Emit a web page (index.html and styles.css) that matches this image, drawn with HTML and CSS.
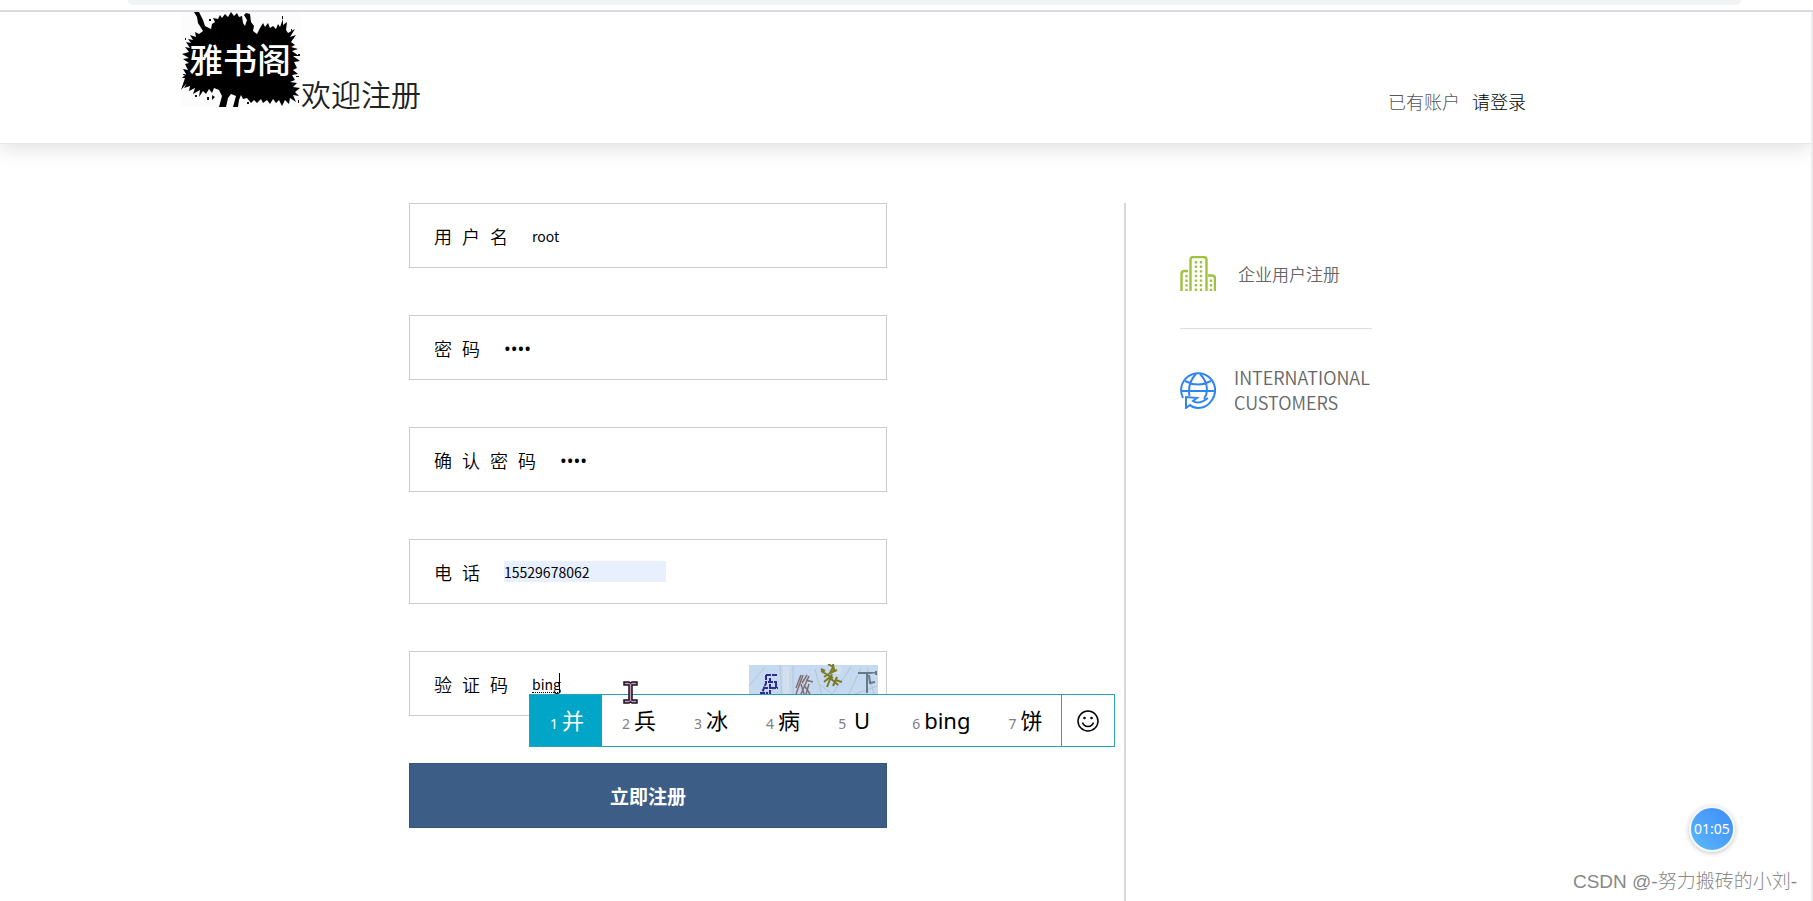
FILE: index.html
```html
<!DOCTYPE html>
<html lang="zh-CN">
<head>
<meta charset="utf-8">
<title>欢迎注册</title>
<link rel="stylesheet" href="styles.css">
</head>
<body>
<div class="toolbar"><div class="omnibox"></div></div>
<div class="page">
  <header class="header">
    <div class="header-inner">
      <div class="brand">
        <svg class="logo" viewBox="0 0 120 95" role="img" aria-label="雅书阁">
          <rect width="120" height="95" fill="#fcfcfc"/>
          <path d="M13 0L18 0L22 8L24 14L30 17L31 12L34 10L32 6L37 7L39 3L41 6L44 2L47 5L50 0L53 4L56 1L58 5L61 4L62 11L64 14L66 8L63 3L65 1L69 2L70 10L73 14L72 19L76 22L79 16L82 11L84 15L87 11L89 16L92 14L95 17L97 12L99 15L102 7L102 13L106 10L105 18L107 21L114 17L109 25L115 23L110 30L114 33L110 35L117 37L111 39L118 44L112 44L119 49L113 50L116 56L112 58L117 62L111 63L114 68L109 70L116 71L112 75L119 76L114 80L118 84L112 83L115 90L109 86L108 92L104 88L101 94L98 88L95 91L92 87L89 92L86 88L82 91L80 87L76 91L73 88L70 91L66 86L62 87L60 83L58 88L57 95L52 95L55 84L50 82L47 86L45 95L38 95L41 84L38 78L33 76L31 81L28 77L25 82L22 79L18 85L19 78L12 82L14 76L8 79L9 74L3 76L6 71L0 78L4 66L1 66L5 62L2 57L7 58L4 52L8 51L2 47L8 46L1 42L8 40L4 35L9 36L5 30L10 31L7 27L12 28L9 23L15 25L14 20L18 22L22 19L17 11L16 5Z" fill="#000"/>
          <path d="M117 42h2v2h-2zM115 64h3v1h-3zM2 62h2v1H2zM14 83h2v2h-2zM110 17h1v2h-1zM28 7h2v2h-2zM101 4h1v3h-1zM4 26h1v2H4zM26 85h2v3h-2zM31 83l3 2-3 3zM117 88h1v3h-1zM66 90h2v2h-2z" fill="#111"/>
          <text x="8" y="61" class="logo-text">雅书阁</text>
        </svg>
        <h1 class="brand-title">欢迎注册</h1>
      </div>
      <p class="login-hint">已有账户 <a href="#login">请登录</a></p>
    </div>
  </header>

  <main class="main">
    <form class="form" onsubmit="return false">
      <div class="field"><label for="user">用&nbsp;&nbsp;户&nbsp;&nbsp;名</label><input id="user" type="text" value="root"></div>
      <div class="field"><label for="pwd">密&nbsp;&nbsp;码</label><input id="pwd" type="password" value="root"></div>
      <div class="field"><label for="pwd2">确&nbsp;&nbsp;认&nbsp;&nbsp;密&nbsp;&nbsp;码</label><input id="pwd2" type="password" value="root"></div>
      <div class="field"><label for="tel">电&nbsp;&nbsp;话</label><input id="tel" class="autofilled" type="tel" value="15529678062"></div>
      <div class="field">
        <label for="code">验&nbsp;&nbsp;证&nbsp;&nbsp;码</label>
        <span class="composing"><input id="code" type="text" value="bing"><span class="composing-mark"></span></span>
        <svg class="captcha" viewBox="0 0 129 40" role="img" aria-label="验证码图片">
          <rect y="1" width="129" height="39" fill="#c5d9f1"/>
          <path d="M0 22L16 3M31 1l2 38M44 1v38M3 36l25-12M50 12l12 20M66 5l8 30M82 32L102 3M98 34l14-30M118 4l8 30M106 30l22-8M70 20l20 15" stroke="#b9c4cf" fill="none"/>
          <path d="M34 3h6v30h-6zM80 2h12v8H80z" fill="#d2dfee"/>
          <g fill="none" stroke-width="2">
            <path d="M17 11h11M17 11v8l-4 10M19 18h9M22 24h7M21 14v17M27 19v6M14 24h5M11 29h8" stroke="#302b91" stroke-dasharray="5 1"/>
            <path d="M52 11l-5 13M54 11l-7 19M58 11l-5 8M60 12l-8 18M57 16l7 2M55 21l6 9M52 20l3 10M60 20l-3 10" stroke="#806e70" stroke-width="1.500"/>
            <path d="M79 0l5 3-3 6 7-3M72 7l12 7M75 13l11-7M83 10l-5 13M80 13l9 8M88 13l-4 9M75 18l7-6M86 16l7 2M72 5l4 2M84 0l1 6" stroke="#7b7c22"/>
            <path d="M109 9h12l6-1M118 10v19M120 11l1 8 5-1M127 7v4" stroke="#687987"/>
          </g>
        </svg>
        <div class="ime">
          <ol class="candidates">
            <li class="candidate selected"><span class="num">1</span>并</li>
            <li class="candidate"><span class="num">2</span>兵</li>
            <li class="candidate"><span class="num">3</span>冰</li>
            <li class="candidate"><span class="num">4</span>病</li>
            <li class="candidate"><span class="num">5</span><span class="letter">U</span></li>
            <li class="candidate"><span class="num">6</span>bing</li>
            <li class="candidate"><span class="num">7</span>饼</li>
          </ol>
          <button class="emoji" type="button" aria-label="表情">
            <svg viewBox="0 0 22 22" width="22" height="22"><circle cx="11" cy="11" r="10" fill="none" stroke="#000" stroke-width="1.500"/><circle cx="7.500" cy="8" r="1.300"/><circle cx="14.500" cy="8" r="1.300"/><path d="M5.500 12.500a5.800 5.800 0 0 0 11 0" fill="none" stroke="#000" stroke-width="1.500"/></svg>
          </button>
        </div>
        <svg class="ibeam" viewBox="0 0 15 23" width="15" height="23"><path d="M1 1h5l1.500 1L9 1h5v3H9v15h5v3H9l-1.500-1L6 22H1v-3h5V4H1z" fill="#c79bc4" stroke="#1c1119" stroke-width="1.500"/></svg>
      </div>
      <button class="submit" type="submit">立即注册</button>
    </form>

    <aside class="aside">
      <a class="aside-link company" href="#company">
        <svg viewBox="0 0 36 36" width="36" height="36" fill="none" stroke="#9fc241" stroke-width="2.400">
          <path d="M10.500 35V4q0-3 3-3h10q3 0 3 3v31M1.500 35V18q0-3 3-3h3.500M28 19.500h4q3 0 3 3V35"/>
          <path d="M16 5v30M21 5v30M6.500 19v16M31 23.500v12" stroke-dasharray="2.400 2.200"/>
        </svg>
        <span>企业用户注册</span>
      </a>
      <a class="aside-link international" href="#international">
        <svg viewBox="0 0 36 38" width="36" height="38" fill="none" stroke="#3185f0" stroke-width="2">
          <path d="M3 27A17 17 0 1 1 32 29Q27 37 18 37q-5 0-8-3l-4 3V26l11 1-4 3q6 4 15-3"/>
          <path d="M1 20h34M5 10q13 7 26 0M16 3q-7 7-7 17 0 3 .5 5M20 3q7 7 7 16 0 5-3 9"/>
        </svg>
        <span>INTERNATIONAL CUSTOMERS</span>
      </a>
    </aside>
  </main>
</div>
<div class="timer">01:05</div>
<div class="watermark">CSDN @-努力搬砖的小刘-</div>
</body>
</html>
```

FILE: styles.css
```css
* {
  box-sizing: border-box;
}

body {
  margin: 0;
  min-height: 100vh;
  display: flex;
  flex-direction: column;
  position: relative;
  background: #fff;
  color: #000;
  font-family: "Noto Sans", "Noto Sans CJK SC", sans-serif;
  font-size: 18px;
}

.toolbar {
  height: 12px;
  padding: 0 72px 0 128px;
  border-bottom: 2px solid #dadce0;
}

.omnibox {
  height: 5px;
  background: #f1f3f4;
  border-radius: 0 0 16px 16px;
}

.page {
  flex: 1;
  display: flex;
  flex-direction: column;
  border-right: 2px solid #ececec;
}

.header {
  height: 132px;
  border-bottom: 1px solid #e8e8e8;
  box-shadow: 0 4px 20px rgba(0, 0, 0, 0.13);
  clip-path: inset(0 0 -40px 0);
}

.header-inner {
  display: flex;
  align-items: flex-start;
  justify-content: space-between;
  padding: 0 285px 0 10%;
}

.brand {
  display: flex;
  align-items: flex-end;
}

.logo {
  width: 120px;
  height: 95px;
}

.logo-text {
  fill: #fff;
  font-family: "Noto Sans CJK SC", sans-serif;
  font-size: 34px;
  font-weight: 500;
}

.brand-title {
  margin: 0;
  color: #222;
  font-family: "Noto Sans CJK SC", sans-serif;
  font-size: 30px;
  font-weight: 350;
  line-height: 28px;
}

.login-hint {
  display: flex;
  gap: 12px;
  margin: 76px 0 0;
  color: #555;
  font-family: "Noto Sans CJK SC", sans-serif;
  font-weight: 300;
  line-height: 27px;
}

.login-hint a {
  color: #000;
  text-decoration: none;
}

.main {
  flex: 1;
  display: flex;
  padding: 59px 0 0 409px;
}

.form {
  width: 478px;
  display: flex;
  flex-direction: column;
  gap: 47px;
}

.field {
  position: relative;
  height: 65px;
  display: flex;
  align-items: center;
  padding: 0 8px 0 24px;
  border: 1px solid #ccc;
}

.field label {
  margin-right: 24px;
  font-family: "Liberation Sans", "Noto Sans CJK SC", sans-serif;
  font-weight: 350;
}

.field input {
  width: 162px;
  height: 21px;
  padding: 0;
  border: 0;
  outline: 0;
  background: transparent;
  font-family: "Noto Sans CJK SC", sans-serif;
  font-size: 14px;
}

.field input[type="password"] {
  font-family: "Noto Sans", sans-serif;
  font-size: 18px;
}

.field .autofilled {
  background: #e8f0fe;
}

.composing {
  position: relative;
  display: flex;
}

.composing-mark {
  position: absolute;
  left: 0;
  top: 0;
  width: 28px;
  height: 20px;
  border-right: 1px solid #000;
  border-bottom: 1px dotted #000;
}

.captcha {
  width: 129px;
  height: 40px;
  margin-left: auto;
}

.ime {
  position: absolute;
  z-index: 1;
  left: 119px;
  top: 42px;
  height: 53px;
  display: flex;
  background: #fff;
  border: 1px solid #2b9fb5;
}

.candidates {
  display: flex;
  margin: 0;
  padding: 0;
  list-style: none;
}

.candidate {
  display: flex;
  align-items: baseline;
  gap: 4px;
  padding: 0 18px 0 20px;
  font-size: 22px;
  line-height: 51px;
  white-space: nowrap;
}

.selected {
  background: #00a5c7;
  color: #fff;
}

.num {
  color: #808080;
  font-size: 14px;
}

.selected .num {
  color: #fff;
}

.letter {
  width: 24px;
  text-align: center;
}

.emoji {
  width: 53px;
  display: flex;
  align-items: center;
  justify-content: center;
  padding: 0;
  background: none;
  border: 0;
  border-left: 1px solid #2b9fb5;
}

.ibeam {
  position: absolute;
  z-index: 2;
  left: 213px;
  top: 29px;
}

.submit {
  height: 65px;
  padding: 0;
  border: 1px solid #36557a;
  background: #3c5d86;
  color: #fff;
  font-family: "Noto Sans CJK SC", sans-serif;
  font-size: 19px;
  font-weight: 700;
}

.aside {
  margin-left: 237px;
  padding: 53px 0 0 54px;
  border-left: 2px solid #d8d8d8;
}

.aside-link {
  width: 192px;
  display: flex;
  align-items: center;
  color: #666;
  text-decoration: none;
}

.aside-link svg {
  flex: none;
}

.company {
  height: 73px;
  gap: 22px;
  align-items: flex-start;
  border-bottom: 1px solid #ddd;
  font-family: "Noto Sans CJK SC", sans-serif;
  font-size: 17px;
  font-weight: 350;
  line-height: 36px;
}

.international {
  gap: 18px;
  padding-top: 36px;
  font-family: "Noto Sans CJK SC", sans-serif;
  font-weight: 350;
  line-height: 25px;
}

.timer {
  position: absolute;
  right: 78px;
  bottom: 49px;
  width: 46px;
  height: 46px;
  border: 2px solid #f2f8ff;
  border-radius: 50%;
  background: linear-gradient(45deg, #5bb8fb, #3f8cf7);
  box-shadow: 0 1px 5px rgba(0, 0, 0, 0.25);
  color: #fff;
  font-size: 14px;
  line-height: 42px;
  text-align: center;
}

.watermark {
  position: absolute;
  right: 16px;
  bottom: 5px;
  color: #888;
  font-family: "Liberation Sans", "Noto Sans CJK SC", sans-serif;
  font-size: 19px;
  font-weight: 300;
  line-height: 28px;
}
```
